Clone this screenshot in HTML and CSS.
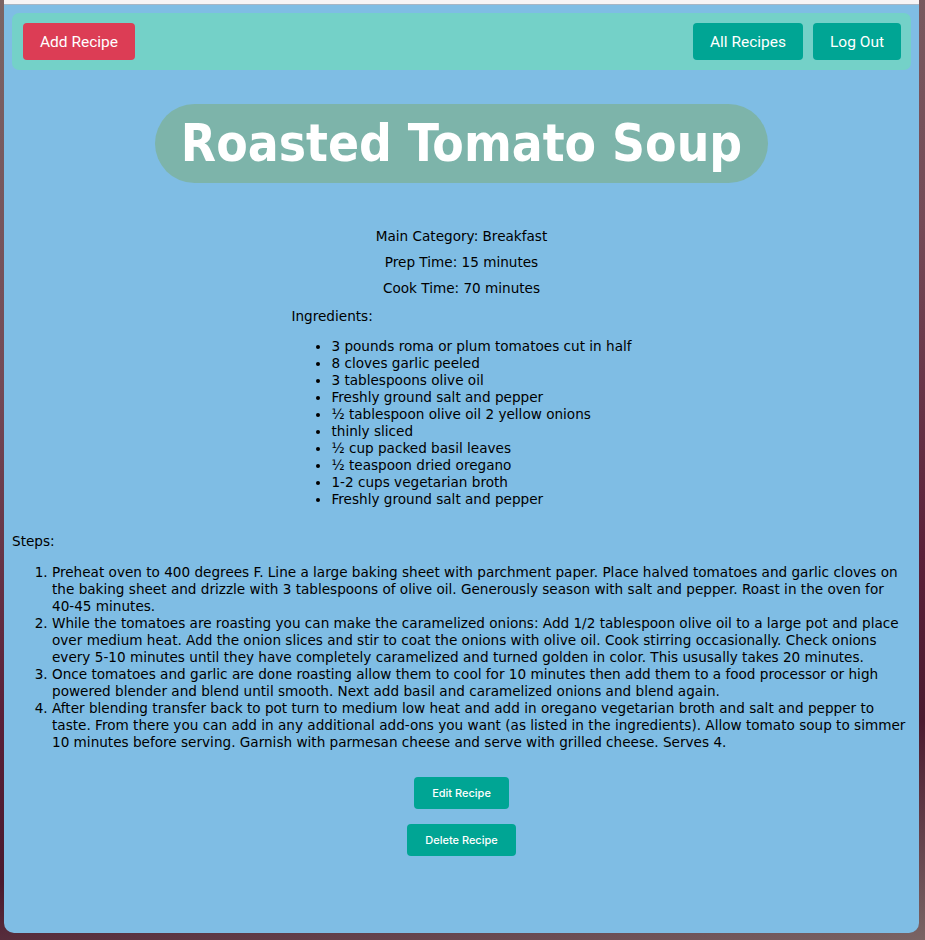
FILE: index.html
```html
<!DOCTYPE html>
<html lang="en">
<head>
<meta charset="utf-8">
<title>Roasted Tomato Soup</title>
<link rel="stylesheet" href="styles.css">
</head>
<body>
<div class="window">
  <div class="toolbar"></div>
  <div class="page">
    <nav class="navbar">
      <button class="btn btn-red">Add Recipe</button>
      <div class="nav-right">
        <button class="btn btn-teal">All Recipes</button>
        <button class="btn btn-teal">Log Out</button>
      </div>
    </nav>

    <div class="recipe">
      <h1 class="title">Roasted Tomato Soup</h1>
      <p class="meta">Main Category: Breakfast</p>
      <p class="meta">Prep Time: 15 minutes</p>
      <p class="meta">Cook Time: 70 minutes</p>
      <div class="ingredients">
        <p class="label">Ingredients:</p>
        <ul>
          <li>3 pounds roma or plum tomatoes cut in half</li>
          <li>8 cloves garlic peeled</li>
          <li>3 tablespoons olive oil</li>
          <li>Freshly ground salt and pepper</li>
          <li>½ tablespoon olive oil 2 yellow onions</li>
          <li>thinly sliced</li>
          <li>½ cup packed basil leaves</li>
          <li>½ teaspoon dried oregano</li>
          <li>1-2 cups vegetarian broth</li>
          <li>Freshly ground salt and pepper</li>
        </ul>
      </div>
    </div>

    <div class="steps">
      <p class="label">Steps:</p>
      <ol>
        <li>Preheat oven to 400 degrees F. Line a large baking sheet with parchment paper. Place halved tomatoes and garlic cloves on the baking sheet and drizzle with 3 tablespoons of olive oil. Generously season with salt and pepper. Roast in the oven for <span class="nowrap">40-45</span> minutes.</li>
        <li>While the tomatoes are roasting you can make the caramelized onions: Add 1/2 tablespoon olive oil to a large pot and place over medium heat. Add the onion slices and stir to coat the onions with olive oil. Cook stirring occasionally. Check onions every <span class="nowrap">5-10</span> minutes until they have completely caramelized and turned golden in color. This ususally takes 20 minutes.</li>
        <li>Once tomatoes and garlic are done roasting allow them to cool for 10 minutes then add them to a food processor or high powered blender and blend until smooth. Next add basil and caramelized onions and blend again.</li>
        <li>After blending transfer back to pot turn to medium low heat and add in oregano vegetarian broth and salt and pepper to taste. From there you can add in any additional <span class="nowrap">add-ons</span> you want (as listed in the ingredients). Allow tomato soup to simmer 10 minutes before serving. Garnish with parmesan cheese and serve with grilled cheese. Serves 4.</li>
      </ol>
    </div>

    <div class="actions">
      <button class="btn-small">Edit Recipe</button>
      <button class="btn-small">Delete Recipe</button>
    </div>
  </div>
</div>
</body>
</html>
```

FILE: styles.css
```css
html, body {
  margin: 0;
  padding: 0;
}

body {
  width: 925px;
  height: 940px;
  overflow: hidden;
  padding-left: 4px;
  box-sizing: border-box;
  background: linear-gradient(170deg, #7b6565 0%, #744a56 35%, #5a2038 65%, #4a1a2e 80%, #7a6464 100%);
  font-family: "DejaVu Sans", "Liberation Sans", sans-serif;
  font-size: 13.6px;
  line-height: 17px;
  color: #000;
}

.window {
  width: 915px;
  height: 933px;
  background: #7fbde4;
  border-radius: 0 0 10px 10px;
  overflow: hidden;
}

.toolbar {
  height: 4px;
  background: #f6f4f5;
  border-bottom: 1px solid #a7b6c4;
}

.page {
  padding: 8px;
}

.navbar {
  display: flex;
  justify-content: space-between;
  align-items: center;
  background: #74d1c8;
  border-radius: 7px;
  padding: 10px 10px 10px 11px;
}

.nav-right {
  display: flex;
  gap: 10px;
}

.btn {
  font-family: Roboto, Inter, sans-serif;
  font-size: 15.5px;
  height: 37px;
  padding: 0 17px;
  border: none;
  border-radius: 4px;
  color: #fff;
  cursor: pointer;
}

.btn-red {
  background: #dc3d55;
}

.btn-teal {
  background: #00a594;
}

.recipe {
  text-align: center;
}

.title {
  display: inline-block;
  margin: 34px 0 45px;
  padding: 0 26px;
  line-height: 79px;
  border-radius: 40px;
  background: #7db4aa;
  color: #fff;
  font-family: "DejaVu Sans Condensed", "DejaVu Sans", sans-serif;
  font-stretch: condensed;
  font-weight: bold;
  font-size: 51px;
}

.meta {
  margin: 0 0 9px;
}

.ingredients {
  display: inline-block;
  text-align: left;
  margin-top: 2px;
}

.label {
  margin: 0;
}

.ingredients ul {
  margin: 13px 0 0;
  padding-left: 40px;
}

.steps {
  margin-top: 25px;
}

.steps ol {
  margin: 14px 0 0;
  padding-left: 40px;
}

.nowrap {
  white-space: nowrap;
}

.actions {
  display: flex;
  flex-direction: column;
  align-items: center;
  gap: 15px;
  margin-top: 26px;
}

.btn-small {
  font-family: Inter, "Open Sans", sans-serif;
  font-size: 11px;
  font-weight: 500;
  height: 32px;
  padding: 0 18px;
  border: none;
  border-radius: 4px;
  background: #00a594;
  color: #fff;
}
```
